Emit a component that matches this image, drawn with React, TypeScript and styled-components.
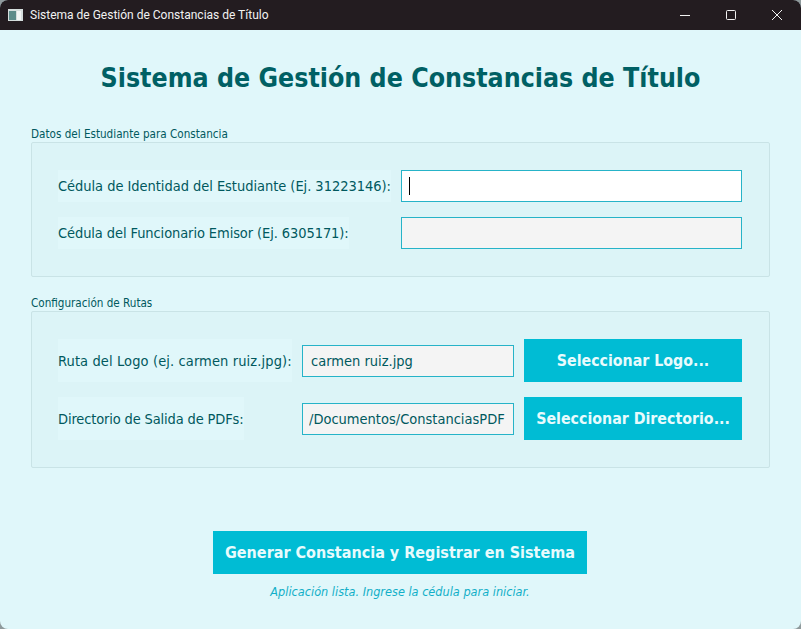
import styled, { createGlobalStyle } from 'styled-components';

const GlobalStyle = createGlobalStyle`
  html, body {
    margin: 0;
    padding: 0;
    background: #8f9a9c;
  }
  * { box-sizing: border-box; }
`;

const Window = styled.div`
  width: 801px;
  height: 629px;
  display: flex;
  flex-direction: column;
  overflow: hidden;
  border-radius: 8px;
  background: #e0f7fa;
  font-family: "DejaVu Sans Condensed", "DejaVu Sans", sans-serif;
`;

const TitleBar = styled.div`
  height: 30px;
  flex: none;
  display: flex;
  align-items: center;
  padding: 0 1px 0 8px;
  background: #231c20;
  color: #f2f2f2;
  font-family: Roboto, "Noto Sans", sans-serif;
  font-size: 12px;
`;

const AppIcon = styled.svg`
  width: 15px;
  height: 12px;
  margin-right: 7px;
`;

const TitleText = styled.span`
  flex: 1;
`;

const WindowButton = styled.div`
  width: 46px;
  height: 30px;
  display: flex;
  align-items: center;
  justify-content: center;
`;

const Content = styled.main`
  flex: 1;
  display: flex;
  flex-direction: column;
  padding: 0 31px;
`;

const Heading = styled.h1`
  margin: 29px 0 0;
  height: 38px;
  line-height: 38px;
  text-align: center;
  font-size: 26.5px;
  font-weight: 700;
  color: #006064;
`;

const Group = styled.section<{ $top: number }>`
  margin-top: ${(p) => p.$top}px;
`;

const GroupTitle = styled.div`
  height: 14px;
  line-height: 12px;
  font-size: 11.6px;
  color: #00595e;
`;

const GroupBox = styled.div<{ $height: number }>`
  height: ${(p) => p.$height}px;
  display: flex;
  flex-direction: column;
  gap: 15px;
  padding: 27px 27px 0 26px;
  background: #dcf4f7;
  border: 1px solid #c9e3e6;
  border-radius: 2px;
`;

const Row = styled.div<{ $height: number }>`
  height: ${(p) => p.$height}px;
  display: flex;
  align-items: center;
`;

const Label = styled.label<{ $tracking: number }>`
  flex: none;
  align-self: stretch;
  display: flex;
  align-items: center;
  font-size: 14.5px;
  letter-spacing: ${(p) => p.$tracking}px;
  white-space: nowrap;
  color: #00595e;
  background: #e0f7fa;
`;

const Field = styled.div<{ $width: number }>`
  position: relative;
  width: ${(p) => p.$width}px;
  height: 32px;
  flex: none;
  margin-left: auto;
`;

const TextInput = styled.input<{ $active?: boolean; $pad: number }>`
  display: block;
  width: 100%;
  height: 100%;
  padding: 0 0 0 ${(p) => p.$pad}px;
  border: 1px solid #26b3c8;
  outline: none;
  border-radius: 0;
  font-family: inherit;
  font-size: 14.5px;
  color: #00595e;
  background: ${(p) => (p.$active ? '#ffffff' : '#f4f4f4')};
`;

const Caret = styled.span`
  position: absolute;
  left: 8px;
  top: 7px;
  width: 1px;
  height: 18px;
  background: #000000;
`;

const ActionButton = styled.button`
  width: 218px;
  height: 43px;
  flex: none;
  margin-left: 10px;
  padding: 0;
  border: none;
  border-radius: 0;
  font-family: inherit;
  font-size: 15.8px;
  font-weight: 700;
  color: #e8fbfd;
  background: #00bcd4;
`;

const Footer = styled.div`
  margin-top: 63px;
  padding-right: 1px;
  display: flex;
  flex-direction: column;
  align-items: center;
`;

const GenerateButton = styled(ActionButton)`
  width: 374px;
  margin-left: 0;
  font-size: 16px;
`;

const Status = styled.div`
  margin-top: 10px;
  height: 16px;
  line-height: 16px;
  font-size: 12.6px;
  font-style: italic;
  color: #12afc8;
`;

function App() {
  return (
    <Window>
      <GlobalStyle />
      <TitleBar>
        <AppIcon viewBox="0 0 15 12">
          <rect width="15" height="12" fill="#d5dedd" />
          <rect x="1" y="2" width="7" height="9" fill="#5d8c8a" />
          <rect x="9" y="2" width="4" height="9" fill="#f2f6f5" />
        </AppIcon>
        <TitleText>Sistema de Gestión de Constancias de Título</TitleText>
        <WindowButton>
          <svg width="10" height="10" viewBox="0 0 10 10">
            <path d="M0 5.5h10" stroke="#f2f2f2" strokeWidth="1" />
          </svg>
        </WindowButton>
        <WindowButton>
          <svg width="10" height="10" viewBox="0 0 10 10">
            <rect x="0.5" y="0.5" width="9" height="9" rx="1" fill="none" stroke="#f2f2f2" />
          </svg>
        </WindowButton>
        <WindowButton>
          <svg width="10" height="10" viewBox="0 0 10 10">
            <path d="M0 0l10 10M10 0L0 10" stroke="#f2f2f2" strokeWidth="1" />
          </svg>
        </WindowButton>
      </TitleBar>
      <Content>
        <Heading>Sistema de Gestión de Constancias de Título</Heading>
        <Group $top={31}>
          <GroupTitle>Datos del Estudiante para Constancia</GroupTitle>
          <GroupBox $height={135}>
            <Row $height={32}>
              <Label $tracking={-0.04}>Cédula de Identidad del Estudiante (Ej. 31223146):</Label>
              <Field $width={341}>
                <TextInput $active $pad={8} readOnly />
                <Caret />
              </Field>
            </Row>
            <Row $height={32}>
              <Label $tracking={-0.09}>Cédula del Funcionario Emisor (Ej. 6305171):</Label>
              <Field $width={341}>
                <TextInput $pad={8} readOnly />
              </Field>
            </Row>
          </GroupBox>
        </Group>
        <Group $top={20}>
          <GroupTitle>Configuración de Rutas</GroupTitle>
          <GroupBox $height={157}>
            <Row $height={43}>
              <Label $tracking={0.11}>Ruta del Logo (ej. carmen ruiz.jpg):</Label>
              <Field $width={212}>
                <TextInput $pad={8} readOnly value="carmen ruiz.jpg" />
              </Field>
              <ActionButton>Seleccionar Logo...</ActionButton>
            </Row>
            <Row $height={43}>
              <Label $tracking={-0.14}>Directorio de Salida de PDFs:</Label>
              <Field $width={212}>
                <TextInput $pad={6} readOnly value="/Documentos/ConstanciasPDF" />
              </Field>
              <ActionButton>Seleccionar Directorio...</ActionButton>
            </Row>
          </GroupBox>
        </Group>
        <Footer>
          <GenerateButton>Generar Constancia y Registrar en Sistema</GenerateButton>
          <Status>Aplicación lista. Ingrese la cédula para iniciar.</Status>
        </Footer>
      </Content>
    </Window>
  );
}

export default App;
